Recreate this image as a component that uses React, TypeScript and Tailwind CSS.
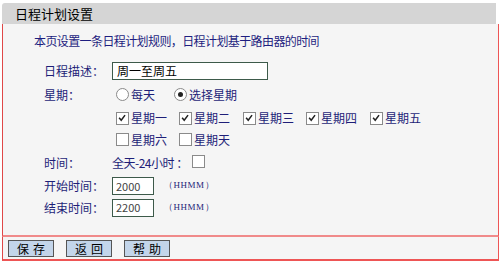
import React from "react";

const font = { fontFamily: '"Noto Sans CJK SC", "Noto Sans", sans-serif' };

function Check({ checked }: { checked?: boolean }) {
  return (
    <span className="relative inline-block w-[13px] h-[13px] border border-[#8a8a8a] bg-white mr-[2px] shrink-0">
      {checked && (
        <svg viewBox="0 0 13 13" className="absolute left-0 top-0 w-[11px] h-[11px]">
          <path d="M2.5 5.5 L5 8.5 L9.5 2.5" stroke="#222" strokeWidth="1.8" fill="none" />
        </svg>
      )}
    </span>
  );
}

function Radio({ checked }: { checked?: boolean }) {
  return (
    <span className="relative inline-flex items-center justify-center w-[13px] h-[13px] rounded-full border border-[#8a8a8a] bg-white mr-[2px] shrink-0">
      {checked && <span className="w-[5px] h-[5px] rounded-full bg-[#222]" />}
    </span>
  );
}

function Day({ label, checked, w }: { label: string; checked?: boolean; w: string }) {
  return (
    <div className={`flex items-center ${w}`}>
      <Check checked={checked} />
      <span>{label}</span>
    </div>
  );
}

function Btn({ label }: { label: string }) {
  return (
    <button className="w-[46px] h-[17px] bg-[#c3d5ea] border border-[#555] text-[12px] leading-[15px] text-black tracking-[4px] pl-[4px]" style={font}>
      {label}
    </button>
  );
}

export default function App() {
  return (
    <div className="w-[500px] h-[262px] bg-white text-[12px] text-[#1e1e78]" style={font}>
      <div className="h-[3px]" />
      <div className="mx-[2px] w-[494px] h-[21px] bg-[#d5d5d5] rounded-tl-[3px] flex items-center pl-[13px] text-[13px] text-black">
        日程计划设置
      </div>
      <div className="ml-[2px] w-[497px] h-[213px] bg-[#f5f5f5] border-l border-r border-b-2 border-l-[#e04848] border-r-[#ee5555] border-b-[#f08a8a] pt-[10px]">
        <div className="pl-[31px] leading-[14px] h-[14px] text-[#1e1e80] tracking-[-0.6px]">本页设置一条日程计划规则，日程计划基于路由器的时间</div>
        <div className="pl-[41px] mt-[11px]">
          <div className="flex items-center h-[23px]">
            <div className="w-[68px]">日程描述：</div>
            <div className="w-[156px] h-[18px] border border-[#3d5a4a] bg-white flex items-center pl-[4px] text-[12px] text-black">周一至周五</div>
          </div>
          <div className="flex items-center h-[25px]">
            <div className="w-[72px]">星期：</div>
            <div className="flex items-center w-[58px]"><Radio /><span>每天</span></div>
            <div className="flex items-center"><Radio checked /><span>选择星期</span></div>
          </div>
          <div className="flex items-center h-[22px] pl-[72px]">
            <Day label="星期一" checked w="w-[63px]" />
            <Day label="星期二" checked w="w-[64px]" />
            <Day label="星期三" checked w="w-[63px]" />
            <Day label="星期四" checked w="w-[64px]" />
            <Day label="星期五" checked w="w-[64px]" />
          </div>
          <div className="flex items-center h-[21px] pl-[72px]">
            <Day label="星期六" w="w-[63px]" />
            <Day label="星期天" w="w-[64px]" />
          </div>
          <div className="flex items-center h-[25px]">
            <div className="w-[68px]">时间：</div>
            <span className="tracking-[-0.5px]">全天-24小时 ：</span>
            <span className="ml-[4px]"><Check /></span>
          </div>
          <div className="flex items-center h-[22px]">
            <div className="w-[68px]">开始时间：</div>
            <div className="w-[42px] h-[18px] border border-[#3d5a4a] bg-white flex items-center pl-[3px] text-[11px] text-[#444]">2000</div>
            <span className="ml-[10px] text-[9px] tracking-[0.5px]" style={{ fontFamily: '"Liberation Serif", serif' }}>（HHMM）</span>
          </div>
          <div className="flex items-center h-[21px]">
            <div className="w-[68px]">结束时间：</div>
            <div className="w-[42px] h-[18px] border border-[#3d5a4a] bg-white flex items-center pl-[3px] text-[11px] text-[#444]">2200</div>
            <span className="ml-[10px] text-[9px] tracking-[0.5px]" style={{ fontFamily: '"Liberation Serif", serif' }}>（HHMM）</span>
          </div>
        </div>
      </div>
      <div className="ml-[2px] w-[497px] h-[24px] bg-[#f5f5f5] border-l border-r border-b-2 border-l-[#e04848] border-r-[#ee5555] border-b-[#ee5555] flex items-center pl-[5px] gap-[12px]">
        <Btn label="保存" />
        <Btn label="返回" />
        <Btn label="帮助" />
      </div>
    </div>
  );
}
